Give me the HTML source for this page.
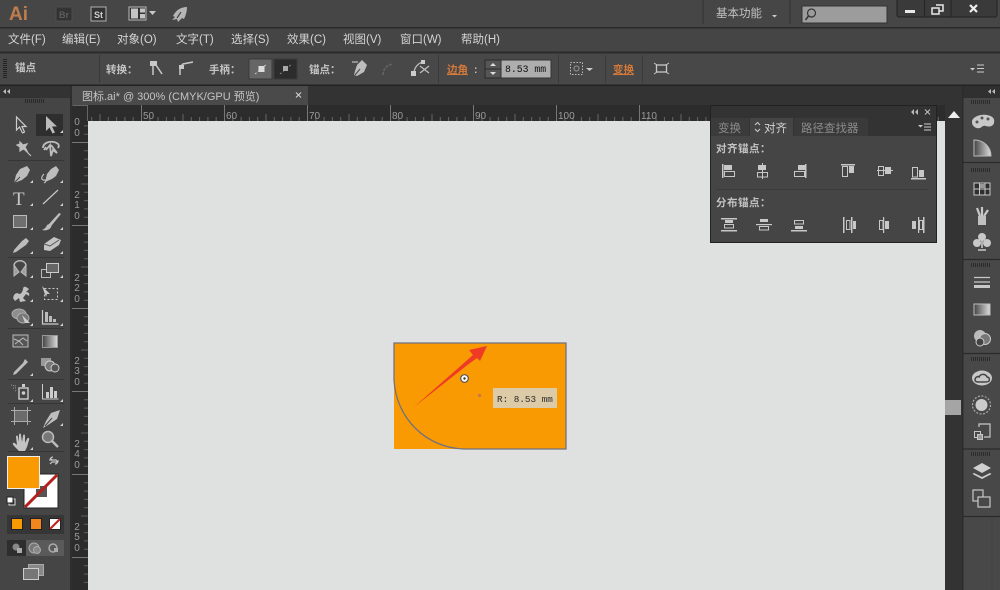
<!DOCTYPE html>
<html><head><meta charset="utf-8"><style>
html,body{margin:0;padding:0;background:#444;width:1000px;height:590px;overflow:hidden}
svg{display:block;filter:blur(.35px)}
text{font-family:"Liberation Sans","Noto Sans CJK SC",sans-serif;fill:#cfcfcf}
.m{font-size:11.5px;fill:#d4d4d4}
.c{font-size:10.5px;fill:#c4c4c4;font-weight:700}
.o{font-size:10.5px;fill:#d2783a;font-weight:700}
.r{font-size:10px;fill:#9a9a9a}
.f{fill:#bdbdbd;stroke:none}
</style></head><body>
<svg width="1000" height="590" viewBox="0 0 1000 590" xmlns="http://www.w3.org/2000/svg">
<defs>
<pattern id="tx" x="58" y="105" width="83" height="16" patternUnits="userSpaceOnUse">
<path d="M8.800 12V16M17.100 12V16M25.400 12V16M33.700 12V16M42 9V16M50.300 12V16M58.600 12V16M66.900 12V16M75.200 12V16" stroke="#666" stroke-width="1" fill="none"/>
<path d="M0.500 0V16" stroke="#777" stroke-width="1" fill="none"/>
</pattern>
<pattern id="ty" x="72" y="59" width="16" height="83" patternUnits="userSpaceOnUse">
<path d="M12 8.800H16M12 17.100H16M12 25.400H16M12 33.700H16M9 42H16M12 50.300H16M12 58.600H16M12 66.900H16M12 75.200H16" stroke="#5e5e5e" stroke-width="1" fill="none"/>
<path d="M0 0.500H16" stroke="#777" stroke-width="1" fill="none"/>
</pattern>
<linearGradient id="gr" x1="0" x2="1"><stop offset="0" stop-color="#444"/><stop offset="1" stop-color="#ddd"/></linearGradient>
<g id="cn"><path d="M0 0h3v-3z" fill="#d0d0d0"/></g>
<g id="grip"><path d="M0 0h20M0 2h20" stroke="#222" stroke-width="1.500" stroke-dasharray="1 1"/></g>
</defs>

<!-- base -->
<rect width="1000" height="590" fill="#444"/>
<rect y="0" width="1000" height="27" fill="#464646"/>
<rect y="27" width="1000" height="1.500" fill="#2a2a2a"/>
<rect y="28.500" width="1000" height="23" fill="#454545"/>
<rect y="51.500" width="1000" height="2" fill="#2b2b2b"/>
<rect y="53.500" width="1000" height="31" fill="#484848"/>
<rect y="84.500" width="1000" height="1.500" fill="#222"/>
<rect y="86" width="1000" height="19" fill="#333"/>

<!-- title bar -->
<text x="9" y="20" style="font-size:19px;font-weight:700;fill:#bf7d4d">Ai</text>
<rect x="56" y="7" width="16" height="14" fill="#333" stroke="#4e4e4e"/>
<text x="59" y="18" style="font-size:9px;fill:#5d5d5d;font-weight:700">Br</text>
<rect x="91" y="7" width="15" height="14" fill="#333" stroke="#b0b0b0"/>
<text x="94" y="18" style="font-size:9px;fill:#d0d0d0;font-weight:700">St</text>
<rect x="129" y="7" width="17" height="13" fill="#333" stroke="#bbb"/>
<rect x="131" y="8.500" width="7" height="10" fill="#c4c4c4"/><rect x="140" y="8.500" width="5" height="4" fill="#c4c4c4"/><rect x="140" y="14" width="5" height="4.500" fill="#c4c4c4"/>
<path d="M149 11h7l-3.500 4z" fill="#c8c8c8"/>
<path d="M187 7c-6 0-11 3-14 9l2 1-3 3 5-1 1 3 4-4 2 1c2-4 3-8 3-12z" fill="#b5b5b5"/>
<path d="M181 12l-4 6" stroke="#464646" stroke-width="1.200"/>
<path d="M703 0v24M790 0v24" stroke="#333"/>
<text x="716" y="17" style="font-size:11.500px;fill:#c0c0c0">基本功能</text>
<path d="M772 15h5l-2.500 2.500z" fill="#ccc"/>
<rect x="802" y="6" width="85" height="17" fill="#9c9c9c" stroke="#333"/>
<circle cx="811.500" cy="13" r="4" fill="none" stroke="#333" stroke-width="1.200"/><path d="M808.500 16l-3 4" stroke="#333" stroke-width="1.500"/>
<rect x="897" y="-3" width="100" height="20" rx="2" fill="#3a3a3a" stroke="#222"/>
<path d="M924.500 0v17M951 0v17" stroke="#242424"/>
<rect x="905" y="10" width="10" height="3" fill="#e8e8e8"/>
<path d="M932 8h7v6h-7zM936 5h7v6h-4" fill="none" stroke="#e8e8e8" stroke-width="1.500"/>
<path d="M970 5l7 7M977 5l-7 7" stroke="#eee" stroke-width="2.200"/>

<!-- menu -->
<text class="m" x="8" y="43">文件(F)</text>
<text class="m" x="62" y="43">编辑(E)</text>
<text class="m" x="117" y="43">对象(O)</text>
<text class="m" x="176" y="43">文字(T)</text>
<text class="m" x="231" y="43">选择(S)</text>
<text class="m" x="287" y="43">效果(C)</text>
<text class="m" x="343" y="43">视图(V)</text>
<text class="m" x="400" y="43">窗口(W)</text>
<text class="m" x="461" y="43">帮助(H)</text>

<!-- control bar -->
<path d="M5 59v20" stroke="#222" stroke-width="4" stroke-dasharray="1 1"/>
<text class="c" x="15" y="71">锚点</text>
<path d="M99.500 55v28M438.500 55v28M558.500 55v28M605.500 55v28M642.500 55v28" stroke="#3a3a3a"/>
<text class="c" x="106" y="73">转换：</text>
<rect x="150" y="61" width="7" height="5" fill="#c8c8c8"/><path d="M153 66v9M156 65l6 9" stroke="#c8c8c8" stroke-width="1.500" fill="none"/>
<path d="M180 75v-8l3-3 10-2" fill="none" stroke="#c8c8c8" stroke-width="1.500"/><rect x="179" y="65" width="5" height="4" fill="#c8c8c8"/>
<text class="c" x="209" y="73">手柄：</text>
<rect x="249" y="59" width="23" height="20" fill="#666" stroke="#3a3a3a"/>
<rect x="274" y="59" width="23" height="20" fill="#2c2c2c" stroke="#3a3a3a"/>
<path d="M255 74l12-10" stroke="#ccc" stroke-dasharray="2 2"/><rect x="258.500" y="66" width="6" height="6" fill="#ddd"/>
<path d="M280 74l12-10" stroke="#888" stroke-dasharray="2 2"/><rect x="283" y="66" width="5" height="5" fill="#aaa"/>
<text class="c" x="309" y="73">锚点：</text>
<path d="M362 60l5 5-3 7-7 4-3-1 1-4 2-6z" class="f"/><path d="M355 75l5-6" stroke="#484848"/>
<path d="M352 62h6" stroke="#bdbdbd" stroke-width="1.200"/>
<path d="M383 75c0-6 4-10 10-11" fill="none" stroke="#666" stroke-width="1.500" stroke-dasharray="3 1"/>
<path d="M414 73c0-5 4-10 9-11M420 66l9 7M420 73l9-7" fill="none" stroke="#bdbdbd" stroke-width="1.300"/><rect x="411" y="71" width="5" height="5" fill="#ccc"/><rect x="421" y="60" width="4" height="4" fill="#ccc"/>
<text class="o" x="447" y="73" text-decoration="underline">边角</text><text class="c" x="474" y="73">:</text>
<rect x="485" y="60" width="16" height="18" fill="#555" stroke="#2a2a2a"/><path d="M485 69h16" stroke="#2a2a2a"/>
<path d="M490 66l3-3 3 3zM490 72l3 3 3-3z" fill="#ddd"/>
<rect x="501" y="60" width="50" height="18" fill="#aeaeae" stroke="#333"/>
<text x="505" y="72" style="font-family:'Liberation Mono',monospace;font-size:9.800px;fill:#111">8.53 mm</text>
<rect x="570.500" y="62.500" width="12" height="12" fill="none" stroke="#bbb" stroke-dasharray="1.500 1.500"/><circle cx="576.500" cy="68.500" r="2.500" fill="none" stroke="#999"/>
<path d="M586 68h7l-3.500 3z" fill="#ccc"/>
<text class="o" x="613" y="73" text-decoration="underline">变换</text>
<rect x="656.500" y="65" width="10" height="7" fill="none" stroke="#c8c8c8" stroke-width="1.300"/>
<path d="M654 63l3 2M669 63l-3 2M654 74l3-2M669 74l-3-2" stroke="#c8c8c8"/>
<path d="M970 68h5l-2.500 2.500z" fill="#ccc"/><path d="M977 65h7M977 68.500h7M977 72h7" stroke="#ccc"/>

<!-- left toolbar top strip -->
<rect x="0" y="86" width="70" height="504" fill="#454545"/>
<rect x="0" y="86" width="70" height="12" fill="#333"/>
<path d="M10 89l-3 2.500 3 2.500zM6 89l-3 2.500 3 2.500z" fill="#bbb"/>
<rect x="70" y="86" width="2" height="504" fill="#2e2e2e"/>
<use href="#grip" x="25" y="100"/>

<!-- tab -->
<rect x="72" y="86" width="236" height="19" fill="#4a4a4a"/>
<text x="82" y="100" style="font-size:11px;fill:#c4c4c4">图标.ai* @ 300% (CMYK/GPU 预览)</text>
<path d="M296 92.500l5 5M301 92.500l-5 5" stroke="#ccc" stroke-width="1.200"/>

<!-- rulers -->
<rect x="72" y="105" width="873" height="16" fill="#2c2c2c"/>
<rect x="72" y="105" width="16" height="485" fill="#2c2c2c"/>
<rect x="88" y="105" width="857" height="16" fill="url(#tx)"/>
<rect x="72" y="121" width="16" height="469" fill="url(#ty)"/>
<path d="M72.500 105.500h15.500M87.500 105v16" stroke="#666" fill="none"/>
<text class="r" x="143" y="119">50</text><text class="r" x="226" y="119">60</text><text class="r" x="309" y="119">70</text><text class="r" x="392" y="119">80</text><text class="r" x="475" y="119">90</text><text class="r" x="558" y="119">100</text><text class="r" x="641" y="119">110</text>
<g text-anchor="middle">
<text class="r" x="77" y="125">0</text><text class="r" x="77" y="136">0</text>
<text class="r" x="77" y="198">2</text><text class="r" x="77" y="208">1</text><text class="r" x="77" y="219">0</text>
<text class="r" x="77" y="281">2</text><text class="r" x="77" y="291">2</text><text class="r" x="77" y="302">0</text>
<text class="r" x="77" y="364">2</text><text class="r" x="77" y="374">3</text><text class="r" x="77" y="385">0</text>
<text class="r" x="77" y="447">2</text><text class="r" x="77" y="457">4</text><text class="r" x="77" y="468">0</text>
<text class="r" x="77" y="530">2</text><text class="r" x="77" y="540">5</text><text class="r" x="77" y="551">0</text>
</g>

<!-- canvas -->
<rect x="88" y="121" width="857" height="469" fill="#dfe1e0"/>
<!-- scrollbar -->
<rect x="945" y="105" width="17" height="485" fill="#333"/>
<path d="M948 118l6-7 6 7z" fill="#eee"/>
<rect x="945" y="400" width="16" height="15" fill="#a5a5a5"/>

<!-- artwork -->
<rect x="394" y="343" width="172" height="106" fill="#f99a03"/>
<path d="M394 380V343H566V449H464" fill="none" stroke="#71727f" stroke-width="1.300"/>
<path d="M394 380c2 38 32 68 70 69" fill="none" stroke="#71727f" stroke-width="1.300"/>
<path d="M414 407L473 355L469 350L487 346L480 361L477 358L470 363z" fill="#ef3a26"/>
<circle cx="464.500" cy="378.500" r="3.800" fill="#fff" stroke="#555" stroke-width="1.200"/><circle cx="464.500" cy="378.500" r="1.200" fill="#333"/>
<circle cx="479.500" cy="395.500" r="1.600" fill="#c8774a"/>
<rect x="493" y="388" width="64" height="20" fill="#dccba6"/>
<text x="497" y="402" style="font-family:'Liberation Mono',monospace;font-size:9.300px;fill:#2a2a2a">R: 8.53 mm</text>

<!-- align panel -->
<rect x="710.500" y="105.500" width="226" height="137" fill="#454545" stroke="#222"/>
<rect x="711" y="106" width="225" height="12" fill="#333"/>
<rect x="711" y="118" width="225" height="18" fill="#333"/>
<path d="M914 109l-3 3 3 3zM918 109l-3 3 3 3z" fill="#bbb"/>
<path d="M925 109.500l5 5M930 109.500l-5 5" stroke="#bbb" stroke-width="1.100"/>
<rect x="711" y="118" width="38" height="18" fill="#3b3b3b"/>
<rect x="750" y="118" width="43" height="18" fill="#454545"/>
<rect x="794" y="118" width="74" height="18" fill="#3a3a3a"/>
<text x="718" y="132" style="font-size:11.500px;fill:#8c8c8c">变换</text>
<path d="M755 125l2.500-2.500 2.500 2.500M755 129l2.500 2.500 2.500-2.500" fill="none" stroke="#ccc"/>
<text x="764" y="132" style="font-size:11.500px;fill:#d4d4d4">对齐</text>
<text x="801" y="132" style="font-size:11.500px;fill:#8c8c8c">路径查找器</text>
<path d="M918 125h5l-2.500 2.500z" fill="#ccc"/><path d="M924 124h7M924 127h7M924 130h7" stroke="#ccc"/>
<text class="c" x="716" y="152" style="letter-spacing:.5px">对齐锚点：</text>
<text class="c" x="716" y="206" style="letter-spacing:.5px">分布锚点：</text>
<path d="M716 189.500h212" stroke="#3b3b3b"/>
<g fill="#c8c8c8" stroke="none">
<rect x="722" y="164" width="1.500" height="14"/><rect x="724" y="165" width="8" height="5"/>
<rect x="758" y="165" width="8" height="5"/><rect x="762" y="163" width="1" height="16"/>
<rect x="798" y="165" width="8" height="5"/><rect x="805" y="164" width="1.500" height="14"/>
<rect x="841" y="164" width="14" height="1.500"/><rect x="849" y="166" width="5" height="7"/>
<rect x="877" y="170" width="16" height="1"/><rect x="885" y="167" width="6" height="7"/>
<rect x="911" y="178" width="15" height="1.500"/><rect x="919" y="170" width="5" height="7"/>
<rect x="721" y="218" width="16" height="1.500"/><rect x="721" y="230" width="16" height="1.500"/><rect x="725" y="220" width="8" height="3"/>
<rect x="756" y="224" width="16" height="1.200"/><rect x="760" y="219" width="8" height="3"/>
<rect x="791" y="230" width="16" height="1.500"/><rect x="795" y="226" width="8" height="3"/>
<rect x="843" y="217" width="1.500" height="16"/><rect x="851" y="217" width="1.500" height="16"/><rect x="853" y="221" width="3" height="8"/>
<rect x="883" y="217" width="1.200" height="16"/><rect x="885" y="221" width="4" height="8"/>
<rect x="923" y="217" width="1.500" height="16"/><rect x="912" y="221" width="4" height="8"/><rect x="918" y="217" width="1.200" height="16"/>
</g>
<g fill="none" stroke="#c8c8c8">
<rect x="724.500" y="171.500" width="10" height="5"/>
<rect x="757.500" y="172.500" width="10" height="4.500"/>
<rect x="794.500" y="171.500" width="10" height="5"/>
<rect x="842.500" y="166.500" width="5" height="10"/>
<rect x="878.500" y="166.500" width="5" height="9"/>
<rect x="912.500" y="167.500" width="5" height="9.500"/>
<rect x="724.500" y="224.500" width="9" height="3.500"/>
<rect x="759.500" y="226.500" width="9" height="3.500"/>
<rect x="794.500" y="220.500" width="9" height="3.500"/>
<rect x="846.500" y="220.500" width="3.500" height="9"/>
<rect x="879.500" y="220.500" width="3.500" height="9"/>
<rect x="919.500" y="220.500" width="3" height="9"/>
</g>

<!-- toolbar icons -->
<rect x="36" y="114" width="27" height="22" fill="#2e2e2e"/>
<g>
<path d="M16.500 117v13l3-3 3 6 2-1-2.500-5.500h4z" fill="none" stroke="#ccc" stroke-width="1.200"/>
<path d="M46 116v15l3.500-3.500 3 6 2.500-1-3-6h5z" fill="#bbb"/>
<use href="#cn" x="60" y="133"/>
<path d="M20 142l3 3 4-1-2 3 2 4-4-2-3 2 0-4-3-2 3-1zM25 150l6 6" fill="#bdbdbd" stroke="#bdbdbd" stroke-width="1.200"/>
<path d="M43 148c0-5 6-7 11-6 4 1 6 3 4 6M46 150l4-5 1 11 2-6 4 3-6-8M44 150l2-3" fill="none" stroke="#bdbdbd" stroke-width="1.800"/>
<path d="M27 166l3 4-3 6-5 4-8 3 2-8 4-6z" fill="#bdbdbd"/><path d="M14 183l6-6" stroke="#454545"/><use href="#cn" x="30" y="183"/>
<path d="M56 166l3 4-3 6-4 3-7 3 2-8 4-5z" fill="#bdbdbd"/><path d="M44 174c-3 3-3 6 0 6s2 2 0 3" fill="none" stroke="#bdbdbd" stroke-width="1.200"/><use href="#cn" x="60" y="183"/>
<text x="13" y="205" style="font-family:'Liberation Serif',serif;font-size:19px;fill:#c8c8c8">T</text><use href="#cn" x="30" y="206"/>
<path d="M43 204l15-14" stroke="#c8c8c8" stroke-width="1.200"/><use href="#cn" x="60" y="206"/>
<rect x="13.500" y="215.500" width="13" height="12" fill="#6f6f6f" stroke="#bbb"/><use href="#cn" x="30" y="230"/>
<path d="M59 213l-10 11-2 1c-1 3-3 4-5 5 3 1 8 0 9-3l1-2 9-11z" fill="#bdbdbd"/><use href="#cn" x="60" y="230"/>
<path d="M26 238l3 3-3 4-10 7-3 1 1-3 8-9z" fill="#bdbdbd"/><use href="#cn" x="30" y="254"/>
<path d="M44 244l10-7 7 3-2 5-9 6-6-1z" fill="#c4c4c4"/><path d="M44 244l6 2 9-6" fill="none" stroke="#555"/><use href="#cn" x="60" y="254"/>
<path d="M14 265v11l5-4zM26 265v11l-5-4z" fill="#9e9e9e" stroke="#bbb"/><path d="M14 266c0-7 12-7 12 0" fill="none" stroke="#bbb" stroke-width="1.400"/><use href="#cn" x="30" y="278"/>
<rect x="41.500" y="269.500" width="9" height="8" fill="none" stroke="#bbb"/><rect x="46.500" y="263.500" width="12" height="9" fill="#666" stroke="#ccc"/><use href="#cn" x="60" y="278"/>
<path d="M14 295c4-5 5 2 8-3 2-3 0-6 4-5l3 2-3 3c2 0 4 1 3 4l-3-2-3 4 3 3-6 1-1-4-4 3-2-3z" fill="#c0c0c0"/><use href="#cn" x="30" y="302"/>
<path d="M42 286l8 8-3 0-1 3z" fill="#c4c4c4"/><rect x="44.500" y="288.500" width="13" height="11" fill="none" stroke="#ccc" stroke-dasharray="2 2"/><use href="#cn" x="60" y="302"/>
<ellipse cx="19" cy="314" rx="7" ry="5" fill="#8e8e8e" stroke="#aaa"/><ellipse cx="23" cy="318" rx="6" ry="5" fill="#777" stroke="#aaa"/><path d="M22 315l8 8-5 0z" fill="#ccc"/><use href="#cn" x="30" y="326"/>
<path d="M42.500 310v14h16" fill="none" stroke="#ccc" stroke-width="1.200"/><rect x="45" y="312" width="3" height="10" fill="#bbb"/><rect x="49" y="316" width="3" height="6" fill="#bbb"/><rect x="53" y="319" width="3" height="3" fill="#bbb"/><use href="#cn" x="60" y="326"/>
<rect x="13" y="335" width="15" height="12" fill="#555" stroke="#bbb"/><path d="M14 339l5 2 4-3 4 3M15 344l4-3 4 4" stroke="#bbb" fill="none"/>
<rect x="42.500" y="335.500" width="15" height="12" fill="url(#gr)" stroke="#999"/>
<path d="M25 359l3 3-3 3-9 9-3 1 1-3 9-9z" fill="#bdbdbd"/><use href="#cn" x="30" y="376"/>
<rect x="41" y="358" width="10" height="8" fill="#999"/><circle cx="50" cy="366" r="5" fill="#777" stroke="#ccc"/><circle cx="55" cy="368" r="4" fill="#555" stroke="#ccc"/>
<rect x="19" y="388" width="9" height="11" fill="none" stroke="#ccc" stroke-width="1.400"/><rect x="22" y="384" width="3" height="3" fill="#ccc"/><circle cx="23.500" cy="393" r="1.800" fill="#ccc"/><path d="M11 385l5 1M13 388l4 0M15 391l2-1" stroke="#999" stroke-dasharray="1 1"/><use href="#cn" x="30" y="402"/>
<path d="M42.500 384v15h16" fill="none" stroke="#ccc"/><rect x="46" y="392" width="3" height="6" fill="#ccc"/><rect x="50" y="387" width="3" height="11" fill="#ccc"/><rect x="54" y="391" width="3" height="7" fill="#ccc"/><use href="#cn" x="60" y="402"/>
<rect x="14.500" y="410.500" width="13" height="11" fill="#6b6b6b" stroke="#aaa"/><path d="M14.500 407v3M27.500 407v3M14.500 422v3M27.500 422v3M11 410.500h3M28 410.500h3M11 421.500h3M28 421.500h3" stroke="#aaa"/>
<path d="M60 410l-3 9-9 6-5 3 3-7 5-8z" fill="#bdbdbd"/><path d="M45 426l7-8" stroke="#454545"/><use href="#cn" x="60" y="426"/>
<path d="M17 449c-3-3-5-5-4-6s3 1 4 2l-1-8c0-2 2-2 2 0l1 5 0-7c0-2 2-2 2 0l1 7 1-6c0-2 2-2 2 0l0 7 2-4c1-2 3-1 2 1l-2 7-2 4h-6z" fill="#c4c4c4"/><use href="#cn" x="30" y="450"/>
<circle cx="48" cy="437" r="5.500" fill="#777" stroke="#bbb" stroke-width="1.500"/><path d="M52 441l6 6" stroke="#bbb" stroke-width="2.500"/>
</g>
<path d="M8 160.500h56M8 257.500h56M8 328.500h56M8 379.500h56M8 403.500h56M8 451.500h56" stroke="#363636"/>

<!-- colors -->
<path d="M53 457c-2 0-3 2-3 3l2-1M55 464c2 0 3-2 3-3l-2 1M50 460h6l2 2M58 462h-6l-2 2" fill="none" stroke="#c8c8c8" stroke-width="1.200"/>
<rect x="24" y="474" width="34" height="34" fill="#fff" stroke="#222"/>
<rect x="36" y="486" width="11" height="11" fill="#555"/>
<rect x="7.500" y="456.500" width="32" height="32" fill="#f99a03" stroke="#eee"/>
<path d="M25 507l32-32" stroke="#b5201c" stroke-width="3"/>
<rect x="9" y="499" width="6" height="6" fill="#333" stroke="#ddd"/><rect x="7" y="497" width="6" height="6" fill="#fff" stroke="#222"/>
<rect x="7" y="515" width="57" height="19" fill="#363636"/>
<rect x="11.500" y="518.500" width="11" height="11" fill="#f99a03" stroke="#222"/>
<rect x="30.500" y="518.500" width="11" height="11" fill="#f3871d" stroke="#222"/>
<rect x="49.500" y="518.500" width="11" height="11" fill="#fff" stroke="#222"/><path d="M50 529l10-10" stroke="#c0201c" stroke-width="2"/>
<rect x="7" y="540" width="57" height="16" fill="#5a5a5a"/>
<rect x="7" y="540" width="19" height="16" fill="#2e2e2e"/>
<circle cx="16" cy="547" r="3.500" fill="#888"/><rect x="17" y="548" width="5" height="5" fill="#aaa"/>
<circle cx="34" cy="548" r="5" fill="#777" stroke="#aaa"/><circle cx="37" cy="550" r="3.500" fill="#888" stroke="#aaa"/>
<circle cx="53" cy="548" r="4" fill="none" stroke="#aaa" stroke-width="1.500"/><rect x="54" y="548" width="4" height="4" fill="#aaa"/>
<rect x="28.500" y="564.500" width="15" height="11" fill="#888" stroke="#aaa"/><rect x="23.500" y="568.500" width="15" height="11" fill="#777" stroke="#ccc"/>

<!-- right dock -->
<rect x="962" y="86" width="1.500" height="504" fill="#2c2c2c"/>
<rect x="963.500" y="86" width="36.500" height="504" fill="#484848"/>
<rect x="963.500" y="86" width="36.500" height="12" fill="#303030"/>
<path d="M991 89l-3 2.500 3 2.500zM995 89l-3 2.500 3 2.500z" fill="#bbb"/>
<use href="#grip" x="971" y="101"/>
<path d="M962 162.500h38M962 259.500h38M962 353.500h38M962 449h38M962 516.500h38" stroke="#2a2a2a" stroke-width="1.200"/>
<use href="#grip" x="971" y="169"/>
<use href="#grip" x="971" y="264"/>
<use href="#grip" x="971" y="358"/>
<use href="#grip" x="971" y="453"/>

<path d="M972 122c0-5 8-8 15-7 6 1 8 4 7 8s-6 4-8 3c-3-1-4 1-6 2-3 1-8-1-8-6z" fill="#c8c8c8"/>
<circle cx="977" cy="122" r="1.500" fill="#555"/><circle cx="982" cy="118" r="1.500" fill="#555"/><circle cx="988" cy="119" r="1.500" fill="#555"/>
<path d="M974 140v16h17c0-9-7-16-17-16z" fill="url(#gr)" stroke="#bbb"/>
<rect x="974" y="183" width="16" height="12" fill="#2f2f2f" stroke="#c8c8c8"/><path d="M979.500 183v12M985 183v12M974 189h16" stroke="#c8c8c8"/><rect x="980" y="184" width="5" height="4" fill="#999"/>
<rect x="978" y="216" width="8" height="9" fill="#c0c0c0"/><path d="M980 216l-3-8M982 216v-9M984 216l4-6" stroke="#c8c8c8" stroke-width="2.200"/>
<circle cx="982" cy="237" r="4" fill="#c8c8c8"/><circle cx="977" cy="243" r="4" fill="#c8c8c8"/><circle cx="987" cy="243" r="4" fill="#c8c8c8"/><path d="M982 240v8M978 250h8" stroke="#c8c8c8" stroke-width="1.600"/>
<path d="M974 277.500h16M974 282h16" stroke="#c8c8c8" stroke-width="1.300"/><rect x="974" y="285" width="16" height="3" fill="#c8c8c8"/>
<rect x="974" y="304" width="16" height="11" fill="url(#gr)" stroke="#bbb"/>
<circle cx="980" cy="336" r="6" fill="#bbb"/><circle cx="985" cy="339" r="5.500" fill="#777" stroke="#ccc"/><circle cx="980" cy="342" r="4" fill="#444" stroke="#ccc"/>
<ellipse cx="982" cy="378" rx="10" ry="7.500" fill="#c8c8c8"/><path d="M975 380c0-3 3-4 4-3 2-4 7-3 8 0 2 0 3 2 2 4-1 1-2 1-4 1h-6c-3 0-4-1-4-2z" fill="none" stroke="#444" stroke-width="1.500"/>
<circle cx="981.500" cy="405" r="6" fill="#ccc"/><circle cx="981.500" cy="405" r="9" fill="none" stroke="#aaa" stroke-width="1.200" stroke-dasharray="2 1.500"/>
<path d="M979 427v-3h11v13h-6" fill="none" stroke="#c8c8c8" stroke-width="1.200"/><rect x="974.500" y="431.500" width="6" height="6" fill="none" stroke="#c8c8c8"/><rect x="977.500" y="434.500" width="5" height="5" fill="#999" stroke="#c8c8c8"/>
<path d="M982 463l9 5-9 5-9-5z" fill="#d0d0d0"/><path d="M974 473l8 4 8-4 1.500 1-9.500 5-9.500-5z" fill="#d0d0d0"/>
<rect x="973" y="490" width="10" height="11" fill="none" stroke="#c8c8c8" stroke-width="1.200"/><rect x="978" y="497" width="12" height="10" fill="#484848" stroke="#c8c8c8" stroke-width="1.200"/>
<path d="M992 517v73" stroke="#414141"/>
</svg>
</body></html>
